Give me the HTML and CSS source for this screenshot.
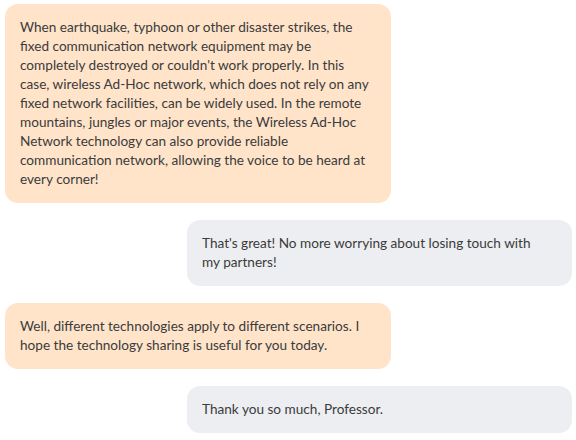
FILE: index.html
```html
<!DOCTYPE html>
<html lang="en">
<head>
<meta charset="utf-8">
<link rel="stylesheet" href="styles.css">
</head>
<body>
<div class="chat">
  <div class="msg msg-in">When earthquake, typhoon or other disaster strikes, the fixed communication network equipment may be completely destroyed or couldn't work properly. In this case, wireless Ad-Hoc network, which does not rely on any fixed network facilities, can be widely used. In the remote mountains, jungles or major events, the Wireless Ad-Hoc Network technology can also provide reliable communication network, allowing the voice to be heard at every corner!</div>
  <div class="msg msg-out">That's great! No more worrying about losing touch with my partners!</div>
  <div class="msg msg-in">Well, different technologies apply to different scenarios. I hope the technology sharing is useful for you today.</div>
  <div class="msg msg-out">Thank you so much, Professor.</div>
</div>
</body>
</html>
```
FILE: styles.css
```css
html, body {
  background: #ffffff;
}
body {
  margin: 4px 4px 4px 5px;
  font-family: "Lato", "Open Sans", sans-serif;
  font-size: 13.6px;
  line-height: 19px;
  color: #3b3b3b;
}
.chat {
  display: flex;
  flex-direction: column;
  gap: 17px;
}
.msg {
  width: 386px;
  box-sizing: border-box;
  padding: 14px 15px;
  border-radius: 13px;
}
.msg-in {
  align-self: flex-start;
  background: #ffe4ca;
}
.msg-out {
  align-self: flex-end;
  width: 385px;
  padding-right: 22px;
  background: #eceef1;
}
```
